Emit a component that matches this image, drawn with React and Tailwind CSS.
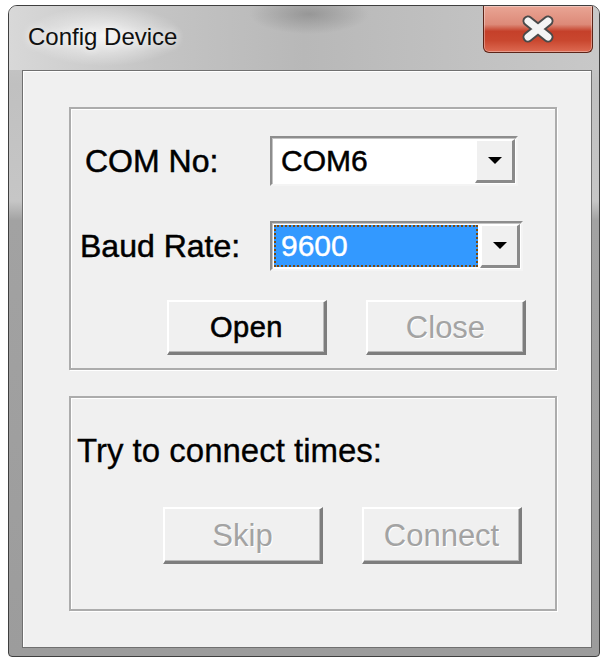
import React from 'react';

const ui = { fontFamily: '"Liberation Sans", Arial, sans-serif' };

// little black arrow on the combo's drop button
const Arrow = () => (
    <svg width="16" height="9" viewBox="0 0 16 9">
        <path d="M1 1 L15 1 L8 8 Z" fill="#000" />
    </svg>
);

const ComboBox = ({ value, width, selected }) => (
    <div
        className={`${width} h-[50px] flex border-2 border-t-[#8d8d8d] border-l-[#8d8d8d] border-b-[#f4f4f4] border-r-[#f4f4f4] bg-white shadow-[inset_1px_1px_0_#c4c4c4]`}
    >
        <div className="flex-1 flex items-stretch p-[2px]">
            {selected ? (
                <div className="flex-1 flex items-center pl-[5px] bg-[#3399ff] text-white border-2 border-dotted border-[#7a4a10] text-[30px] leading-none [-webkit-text-stroke:0.4px_#fff]">
                    {value}
                </div>
            ) : (
                <div className="flex-1 flex items-center pl-[7px] text-black text-[30px] leading-none [-webkit-text-stroke:0.5px_#000]">
                    {value}
                </div>
            )}
        </div>
        <div className="w-[40px] my-[1px] mr-[1px] flex items-center justify-center bg-[#f0f0f0] border-t-2 border-l-2 border-t-white border-l-white border-b-[3px] border-r-[3px] border-b-[#8a8a8a] border-r-[#8a8a8a]">
            <Arrow />
        </div>
    </div>
);

const Btn = ({ children, disabled, h = 'h-[55px]' }) => (
    <button
        type="button"
        disabled={disabled}
        className={`w-[160px] ${h} flex items-center justify-center bg-[#f0f0f0] border-t-2 border-l-2 border-t-white border-l-white border-b-[3px] border-r-[3px] border-b-[#7d7d7d] border-r-[#7d7d7d] shadow-[inset_-1px_-1px_0_#b9b9b9] text-[31px] leading-none ${
            disabled ? 'text-[#a3a3a3] [text-shadow:1px_1px_0_#fff]' : 'text-black'
        }`}
    >
        {children}
    </button>
);

const GroupBox = ({ height, children }) => (
    <div
        className={`w-[488px] ${height} border-2 border-[#acacac] shadow-[inset_1px_1px_0_#fff,1px_1px_0_#fff]`}
    >
        {children}
    </div>
);

export default function App() {
    return (
        <div className="w-[603px] h-[658px] bg-white pl-[8px] pt-[5px]" style={ui}>
            {/* window frame */}
            <div className="w-[592px] h-[652px] flex flex-col rounded-t-[9px] rounded-b-[4px] border border-[#3f3f3f] overflow-hidden bg-[linear-gradient(180deg,#cfcfcf_0%,#c0c0c0_12%,#c6c6c6_30%,#a2a2a2_33%,#9c9c9c_100%)]">
                {/* title bar */}
                <div className="h-[64px] flex items-start bg-[radial-gradient(ellipse_80px_30px_at_95px_30px,rgba(255,255,255,0.8),transparent),radial-gradient(ellipse_60px_20px_at_300px_8px,rgba(110,110,110,0.45),transparent),linear-gradient(90deg,#d8d8d8_0%,#c4c4c4_25%,#b8b8b8_50%,#c2c2c2_80%,#c8c8c8_100%)]">
                    <div className="pl-[19px] pt-[19px] text-[24px] leading-none text-[#101010] [text-shadow:0_0_8px_#fff]">
                        Config Device
                    </div>
                    <div className="ml-auto mr-[6px] w-[110px] h-[47px] flex items-center justify-center rounded-b-[6px] border border-t-0 border-[#5c2418] bg-[linear-gradient(180deg,#e9a595_0%,#dd8a78_40%,#c5402a_55%,#c9472f_75%,#dd6a52_100%)] shadow-[inset_0_0_0_1px_rgba(255,255,255,0.35)]">
                        <svg width="34" height="28" viewBox="0 0 34 28">
                            <path d="M7 6 L27 22 M27 6 L7 22" stroke="#4a4a4a" strokeWidth="11" strokeLinecap="round" />
                            <path d="M7 6 L27 22 M27 6 L7 22" stroke="#f4f4f4" strokeWidth="7" strokeLinecap="round" />
                        </svg>
                    </div>
                </div>

                {/* client area */}
                <div className="flex-1 ml-[13px] mr-[7px] mb-[8px] border border-[#707070] bg-[#f0f0f0] shadow-[inset_1px_1px_0_#fff] pt-[36px] pl-[46px]">
                    <GroupBox height="h-[263px]">
                        <div className="pt-[27px] flex items-center h-[77px]">
                            <div className="w-[199px] pl-[14px] text-[32px] leading-none text-black [-webkit-text-stroke:0.5px_#000]">COM No:</div>
                            <ComboBox value="COM6" width="w-[248px]" />
                        </div>
                        <div className="mt-[35px] flex items-center h-[50px]">
                            <div className="w-[199px] pl-[9px] text-[32px] leading-none text-black [-webkit-text-stroke:0.5px_#000]">Baud Rate:</div>
                            <ComboBox value="9600" width="w-[253px]" selected />
                        </div>
                        <div className="mt-[29px] pl-[96px] flex gap-[39px]">
                            <Btn>
                                <span className="text-[29px] tracking-[0.5px] [-webkit-text-stroke:0.6px_#000]">Open</span>
                            </Btn>
                            <Btn disabled>Close</Btn>
                        </div>
                    </GroupBox>

                    <div className="mt-[26px]">
                        <GroupBox height="h-[215px]">
                            <div className="pt-[36px] pl-[6px] text-[33px] leading-none text-black [-webkit-text-stroke:0.3px_#000]">
                                Try to connect times:
                            </div>
                            <div className="mt-[40px] pl-[92px] flex gap-[39px]">
                                <Btn disabled h="h-[57px]">Skip</Btn>
                                <Btn disabled h="h-[57px]">Connect</Btn>
                            </div>
                        </GroupBox>
                    </div>
                </div>
            </div>
        </div>
    );
}
